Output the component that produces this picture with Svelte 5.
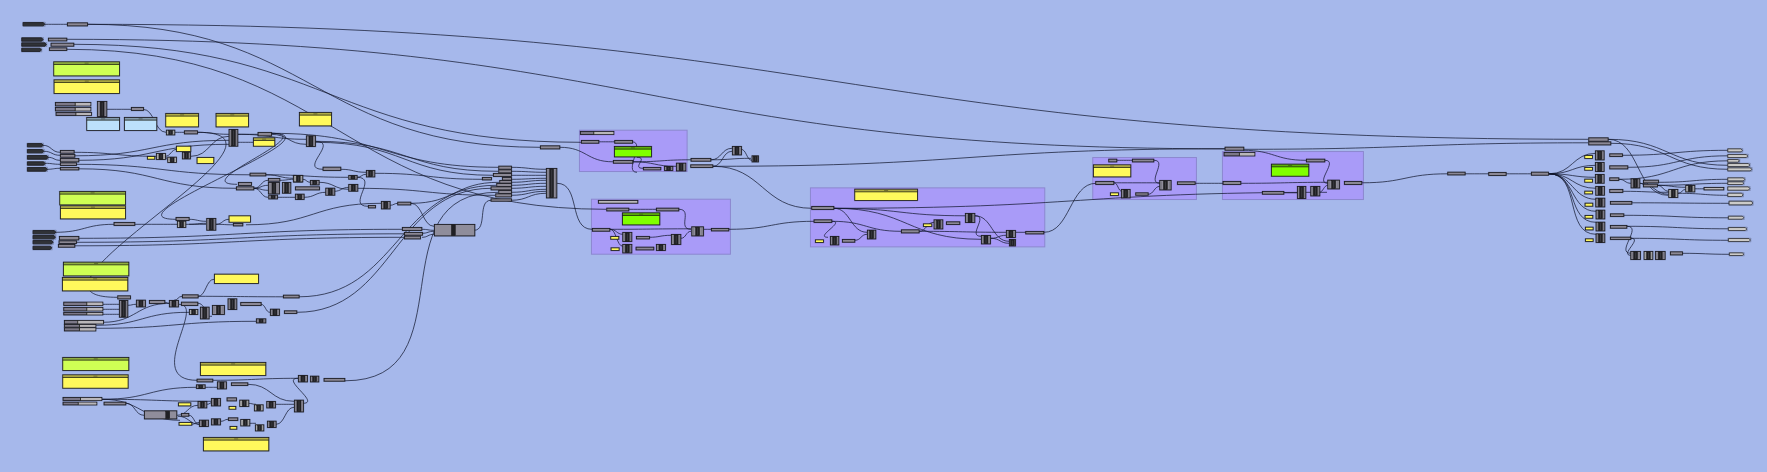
<script>
  // Node boxes are listed per region as x1 y1 x2 y2 in thirds of a pixel, relative to the region origin.
  const regions = [
    { o: [0, 0], n: {
      in: '69 67 134 77,65 113 129 123,65 128 139 138,65 144 124 154,82 430 129 440,82 448 131 458,82 466 144 477,82 485 135 495,82 502 141 513',
      p: '202 68 262 77,145 114 200 122,153 129 221 138,148 143 200 151,394 322 430 331,181 451 222 459,181 463 224 471,181 475 236 485,181 488 229 496,181 502 236 509',
      G: '161 185 358 227,179 574 376 614', Y: '162 239 358 280,181 617 376 656,497 340 595 380,648 340 745 380',
      B: '260 352 358 391,373 352 470 391',
      s: '166 307 272 317 .56,166 322 272 332 .56,168 337 274 346 .56', c: '292 304 320 349' } },
    { o: [130, 100], n: {
      p: '163 92 202 101,384 97 424 107,360 219 407 227,325 247 364 256,319 260 371 269,138 352 177 361,310 370 338 377,415 235 449 243',
      c: '297 88 323 138,157 156 181 176,415 247 448 281,457 247 482 279,230 355 257 390,490 226 516 245',
      l: '109 90 134 104,79 160 106 178,113 171 139 187,142 363 167 382', y: '52 169 74 177,139 138 182 154,201 172 251 190,297 347 361 366', Y: '370 113 434 138' } },
    { o: [230, 90], n: {
      Y: '208 67 304 107',
      c: '229 137 256 169,409 241 434 260,356 256 381 267,241 271 267 284,287 294 314 315,356 283 383 303,196 312 222 328,116 315 142 326,454 334 480 356',
      l: '191 256 218 275', p: '279 231 332 241,196 290 268 299,415 346 436 353,503 336 542 344,517 412 575 421,523 427 577 435,523 438 571 446', g: '613 403 772 437 .36' } },
    { o: [0, 180], n: {
      in: '99 151 167 161,99 166 166 176,99 181 159 191,99 198 155 208',
      p: '342 127 404 136,178 169 236 179,177 182 229 190,175 193 224 201,353 347 391 356,448 361 494 370,547 344 594 353,544 366 593 376',
      c: '358 361 383 411,409 360 436 380,508 361 535 380,601 381 627 416,637 376 673 403,684 356 710 388', l: '568 388 593 403',
      G: '190 246 386 287', Y: '187 292 383 332', y: '643 282 775 310',
      s: '191 366 308 376 .59,191 382 308 392 .59,191 397 308 404 .59,193 421 310 431 .34,193 433 287 441 .48,193 443 287 452 .48' } },
    { o: [40, 250], n: {
      G: '68 322 266 361', Y: '68 374 264 414,481 337 677 376,490 562 686 602',
      p: '602 157 663 166,730 135 777 143,733 182 770 190,471 387 518 395,574 398 623 406,192 456 257 464,424 490 446 498,561 443 589 452,565 503 593 511,852 385 914 393',
      s: '69 442 185 451 .45,69 456 170 464 .45',
      c: '691 177 718 196,649 206 677 218,469 404 495 415,532 395 559 416,474 454 500 473,514 445 541 467,680 454 706 473,478 510 505 529,514 506 541 524,682 513 708 532,763 450 790 485,775 376 802 395,811 378 836 395',
      l: '599 450 626 469,643 464 669 482,602 508 629 527,646 524 671 542', y: '415 458 452 467,417 517 455 525,567 469 587 477,570 529 590 537', g: '313 482 410 506 .72' } },
    { o: [400, 130], n: {
      p: '296 108 334 117,296 119 334 128,280 130 334 139,247 142 274 149,307 142 334 150,299 151 334 159,290 160 334 169,273 170 334 179,296 181 334 190,287 191 334 200,273 206 334 213,421 47 479 56',
      g: '103 283 224 317 .47', c: '439 115 470 203' } },
    { o: [570, 120], n: {
      group: '28 30 351 154,64 237 481 402', s: '31 34 131 43 .4', r: '85 241 203 249',
      p: '34 61 86 69,134 61 187 69,130 121 188 129,220 142 272 149,363 115 422 123,362 134 428 142,110 264 176 272,259 264 326 272,67 325 119 333,199 349 238 356,198 381 251 389,424 325 476 332',
      L: '133 79 244 110,157 278 269 314', c: '283 139 308 151,319 129 347 152,487 79 514 104,546 107 565 125,158 337 185 364,158 373 185 398,259 373 286 391,304 343 332 373,365 320 400 347', y: '122 349 146 357,123 383 147 391' } },
    { o: [790, 170], n: {
      group: '61 53 764 230', Y: '194 57 382 91', p: '65 109 131 118,72 149 125 157,157 208 194 216,334 179 387 188,469 155 509 163,707 184 761 191',
      c: '121 199 146 224,232 180 257 206,432 149 458 176,526 130 554 157,574 196 601 221,649 181 676 202,658 208 676 227', y: '76 209 100 217,400 161 425 169' } },
    { o: [1080, 130], n: {
      group: '38 82 349 208,427 64 850 208', Y: '40 104 152 140', L: '574 102 686 138',
      p: '86 87 110 95,157 87 221 95,47 154 101 163,292 155 345 163,167 188 204 195,435 51 491 60,429 154 482 163,547 184 611 192,679 87 734 95,793 154 845 163,1103 126 1155 134',
      s: '432 67 524 77 .5', y: '91 188 115 196', c: '124 178 150 203,239 151 273 179,652 169 677 205,692 169 719 197,743 150 778 176' } },
    { o: [1540, 120], n: {
      p: '-154 157 -102 166,-26 156 25 165,146 53 204 63,146 65 212 74,209 101 247 109,209 137 263 146,209 173 236 181,209 208 248 217,211 244 275 252,211 281 251 289,211 316 260 324,211 351 272 358,310 180 355 188,310 192 352 200,391 395 427 404',
      c: '166 92 192 119,166 127 192 154,166 163 192 189,167 199 193 225,167 234 194 260,168 270 194 296,168 306 194 332,168 341 194 367,273 176 299 203,272 394 301 418,346 394 375 418',
      l: '386 208 413 232,437 196 464 215,312 394 338 418', y: '134 106 157 115,134 142 157 150,134 177 157 186,134 213 157 221,135 249 158 258,135 286 158 294,136 321 159 329,136 356 159 364', r: '492 202 551 209',
      out: '563 86 607 95,563 103 623 112,563 118 598 126,563 130 629 139,563 143 635 152,563 173 614 182,563 185 611 193,563 200 629 210,563 219 609 229,567 243 638 254,565 288 611 297,565 322 620 331,565 355 631 364,568 398 611 406' } }
  ];

  const nodes = regions.flatMap(({ o, n }) =>
    Object.entries(n).flatMap(([kind, list]) =>
      list.split(',').map((item) => {
        const [a, b, c, d, split = 0.5] = item.split(' ').map(Number);
        return { kind, x: o[0] + a / 3 + 0.1, y: o[1] + b / 3 + 0.2, w: (c - a) / 3, h: (d - b) / 3, split };
      })
    )
  ).filter((n) => !(n.kind === 'g' && n.split === 0.36));
  const groups = nodes.filter((n) => n.kind === 'group');
  const items = nodes.filter((n) => n.kind !== 'group');

  // x1 y1 x2 y2 [outgoing handle [incoming handle]]
  const wires = `
45 24 67 24,88 24 1588 139,88 24 540 147,67 39 1225 148.5,74 44 581 142,67 49 606 209
107 109 131 109,143 109 166 132,175 132 184 132,197 132 229 134,197 132 117 297 126
43 145 60 152,44 151 60 155,48 157 60 160,45 163 60 164,47 169 60 168
74 152 156 156,75 155.5 229 140,79 160 229 144,76 164 250 174.5,79 168.5 236 188
165 156 177 149,165 156 168 160,191 156 229 136
238 134 258 134,238 142 253 142,238 134 306 139,271 134 306 144,271 133 498 167,271 133 237 184 52,271 133 176 219 75
315 141 498 171,315 142 493 175,315 141 323 169 25,341 169 366 172,375 173 482 179
266 174.5 348 177,266 174.5 294 178,357 177 366 174,357 177 368 206 22
254 188 268 180,254 188 268 185,254 188 268 190,254 188 268 197,280 180 294 179,303 179 310 182,319 182 349 189,334 191 349 187,304 197 326 192,277 197 295 197
357 188 495 195,390 205 398 203,411 203 499 182,411 203 434 226
55 232 114 224,135 224 206 224,189 219 206 221,189 224 206 223,216 224 229 219,216 224 233 224.5,246 224.5 381 203
79 238 402 229,76 242 404 233.5,75 245.5 404 237,422 229 434 230,422 233 434 231,422 237 434 234
103 304 119 304,103 309 119 309,103 314 119 314,128 305 136 304,165 302 169 303,174 300 182 296,198 296 214 279,198 296 283 296.5
103 322 170 303,96 325 189 312,96 328 256 321,198 303 209 310,209 316 212 316
179 304 197 380 28 54,261 304 270 312,299 296.5 496 185,297 312 491 188,345 380.5 498 192 125,213 380 298 378
102 399 196 387,102 399 211 401,102 399 180 420,126 403 144 415,178 416 200 424,205 387 217 387,248 384 294 401
177 415 198 405,189 415 199 424,191 424 200 422,207 404 213 402,221 421 228 419,248 403 256 404,249 423 256 423,276 404 294 404,276 424 294 407,303 403 298 378 18
511 167 546 169,511 171 546 172,511 175 546 175,511 179 546 178,511 182 546 180,511 185 546 183,511 188 546 186,511 192 546 189,511 195 546 191,511 200 546 193
474 230 491 200 14,557 183 592 229 24,560 147 613 161.5
599 141.5 615 141.5,632 141.5 637 172 14,637 157 643 168 12,633 161.5 691 159.5,633 161.5 676 166
711 159.5 732 148,711 159.5 751 158,713 166 732 151,713 166 1225 148.5,713 166 812 208,741 149 752 160
629 209 657 209,679 209 691 229 14,610 229 691 228.5,610 229 623 234,610 229 623 246,649 237 671 235,681 238 691 231,704 229 711 229,729 229 814 221
834 208 1327 192,834 208 867 232,834 208 966 215.5,834 208 981 239
832 221 828 237 14,832 221 901 231,855 240 867 234,919 231 1006 232,919 231 934 222
975 215.5 981 236 14,975 215.5 1009 241,991 238 1006 235,991 238 1009 243,1016 232 1026 232,1044 232 1096 183
1117 160 1133 160,1154 160 1160 183 14,1114 182.5 1160 182.5,1114 182.5 1122 191,1148 194 1160 186,1195 183 1223 183
1243 150 1306 160,1243 149 1588 142.5,1325 160 1328 183 14,1241 183 1328 182,1284 192.5 1297 192.5,1319 192 1328 185,1362 182.5 1448 173.5
1465 173.5 1489 173.5,1505 173.5 1532 173.5
1549 173.5 1596 153,1549 173.5 1596 165,1549 173.5 1596 177,1549 173.5 1596 188,1549 173.5 1596 199,1549 173.5 1596 211 26,1549 173.5 1596 222 30,1549 173.5 1596 234 32
1608 139 1728 165,1611 143 1728 169,1608 139 1668 195 32,1622 155 1728 150,1628 167 1728 155.5,1619 179 1728 160.5,1619 179 1631 183
1623 191 1669 192,1640 183 1669 194,1640 183 1644 184,1658 182 1728 179,1657 185 1728 183,1657 185 1669 191,1657 185 1686 187
1678 193 1686 189,1678 193 1728 195,1695 188.5 1704 188.5,1632 202.5 1729 203,1624 215 1728 217.5,1627 226 1728 228.5,1631 238 1729 240,1627 226 1631 253 16,1631 238 1631 255 12,1682 253 1729 254`
    .trim().split(/[,\n]/).map((line) => {
      const [x1, y1, x2, y2, a, b] = line.trim().split(' ').map(Number);
      const h = a ?? Math.abs(x2 - x1) / 2;
      return `M${x1} ${y1 + 0.3}C${x1 + h} ${y1 + 0.3} ${x2 - (b ?? h)} ${y2 + 0.3} ${x2} ${y2 + 0.3}`;
    });

  const tag = ({ x, y, w, h }) =>
    `M${x} ${y}H${x + w - 1.5}L${x + w} ${y + h / 2}L${x + w - 1.5} ${y + h}H${x}Z`;
</script>

<main>
  <svg viewBox="0 0 1767 472" width="1767" height="472">
    {#each groups as n}
      <rect class="group" x={n.x} y={n.y} width={n.w} height={n.h} />
    {/each}
    {#each wires as d}
      <path class="wire" {d} />
    {/each}
    {#each items as n}
      <rect class="halo" x={n.x - 0.8} y={n.y - 0.8} width={n.w + 1.6} height={n.h + 1.6} rx="0.6" />
      {#if n.kind === 'in' || n.kind === 'out'}
        <path class="node {n.kind}" d={tag(n)} />
      {:else}
        <rect class="node {n.kind}" x={n.x} y={n.y} width={n.w} height={n.h} />
      {/if}
      {#if 'YGLB'.includes(n.kind)}
        <rect class="header" x={n.x + 0.4} y={n.y + 0.4} width={n.w - 0.8} height="2" />
        <path class="rule" d="M{n.x} {n.y + 2.6}h{n.w}" />
        <path class="grip" d="M{n.x + n.w / 2 - 2} {n.y + 1.3}h4" />
      {:else if n.kind === 'c' || n.kind === 'l'}
        <rect class="core" x={n.x + n.w / 2 - 2} y={n.y + 0.3} width="4" height={n.h - 0.6} />
        <path class="shine" d="M{n.x + n.w / 2 + 0.1} {n.y + 1}v{n.h - 2}" />
        <path class="ports" d="M{n.x + 1.6} {n.y + 1}v{n.h - 2}M{n.x + n.w - 1.4} {n.y + 1}v{n.h - 2}" />
      {:else if n.kind === 'g'}
        <rect class="core" x={n.x + n.w * n.split - 2} y={n.y + 0.3} width="4" height={n.h - 0.6} />
      {:else if n.kind === 's'}
        <rect class="track" x={n.x + n.w * n.split} y={n.y + 0.4} width={n.w * (1 - n.split) - 0.4} height={n.h - 0.8} />
        <path class="rule" d="M{n.x + n.w * n.split} {n.y}v{n.h}" />
      {/if}
    {/each}
  </svg>
</main>

<style>
  :global(body) { margin: 0; background: #a6b8eb; }
  main { width: 1767px; height: 472px; overflow: hidden; background: #a6b8eb; }
  svg { display: block; }
  .group { fill: #a99bf8; stroke: #8c88cf; stroke-width: 1; }
  .wire { fill: none; stroke: #10162c; stroke-opacity: 0.76; stroke-width: 0.95; }
  .halo { fill: #202434; opacity: 0.3; }
  .node { stroke: #1d1d22; stroke-width: 0.85; }
  .in { fill: #303237; }
  .out { fill: #cccbc8; stroke: #33343a; }
  .p { fill: #8b8895; }
  .c, .g { fill: #8f8d9b; }
  .l { fill: #b9b9bb; }
  .r { fill: #bbb9bd; }
  .s { fill: #7c7888; }
  .track { fill: #b9b6b9; }
  .y, .Y { fill: #fff95c; }
  .G { fill: #cfff54; }
  .L { fill: #80ff00; }
  .B { fill: #bce0fb; }
  .header { fill: #202020; opacity: 0.36; }
  .rule { stroke: #18190f; stroke-width: 0.8; }
  .grip { stroke: #20200f; stroke-width: 0.7; opacity: 0.6; }
  .core { fill: #202024; stroke: #111; stroke-width: 0.4; }
  .shine { stroke: #55555c; stroke-width: 0.7; opacity: 0.7; }
  .ports { fill: none; stroke: #333; stroke-width: 0.6; opacity: 0.4; }
</style>
